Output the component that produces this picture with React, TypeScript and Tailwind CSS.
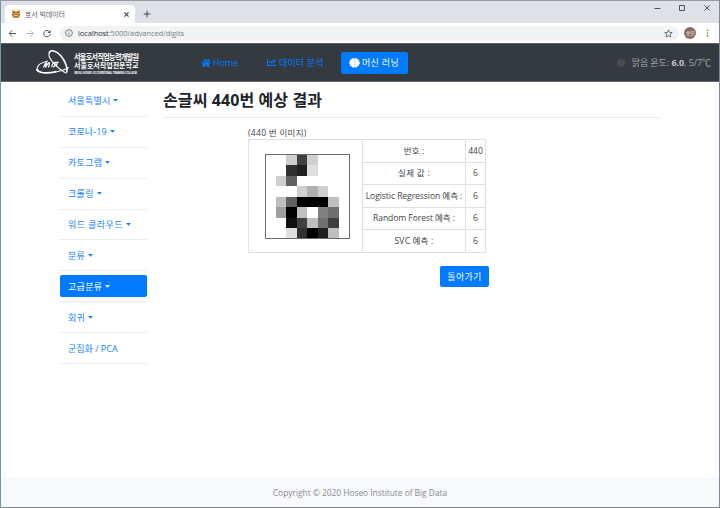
import React from "react";
import { FaHome, FaChartLine } from "react-icons/fa";

const KR = "font-['Open_Sans','Noto_Sans_CJK_KR',sans-serif]";

const menu = [
  { label: "서울특별시", caret: true, spacing: "tracking-[0.2px]" },
  { label: "코로나-19", caret: true, spacing: "tracking-[0.1px]" },
  { label: "카토그램", caret: true, spacing: "tracking-[0.3px]" },
  { label: "크롤링", caret: true, spacing: "tracking-[0.3px]" },
  { label: "워드 클라우드", caret: true, spacing: "tracking-[0.4px]" },
  { label: "분류", caret: true, spacing: "tracking-[0.3px]" },
  { label: "고급분류", caret: true, spacing: "tracking-[0.3px]", active: true },
  { label: "회귀", caret: true, spacing: "tracking-[0.3px]" },
  { label: "군집화 / PCA", caret: false, spacing: "tracking-[0px]" },
];

const digit = [
  [255, 255, 207, 64, 207, 255, 255, 255],
  [255, 255, 48, 32, 223, 255, 255, 255],
  [255, 207, 96, 255, 255, 255, 255, 255],
  [255, 255, 255, 207, 175, 207, 255, 255],
  [255, 191, 96, 0, 0, 0, 191, 255],
  [255, 159, 0, 191, 255, 128, 112, 255],
  [255, 255, 16, 64, 191, 112, 64, 255],
  [255, 255, 223, 48, 0, 32, 191, 255],
];

const results = [
  { name: "번호 :", value: "440", spacing: "tracking-[0.1px]" },
  { name: "실제 값 :", value: "6", spacing: "tracking-[0.3px]" },
  { name: "Logistic Regression 예측 :", value: "6", spacing: "tracking-[-0.04px]" },
  { name: "Random Forest 예측 :", value: "6", spacing: "tracking-[-0.04px]" },
  { name: "SVC 예측 :", value: "6", spacing: "tracking-[0.2px]" },
];

function TabStrip() {
  return (
    <div className="flex h-[23px] border-t border-[#96999d] bg-[#dee1e6] pl-[4px]">
      <div className="mt-[4px] flex h-[18px] w-[130px] items-center rounded-t-[4px] bg-white pl-[7px] pr-[6px]">
        <svg width="8" height="8" viewBox="0 0 8 8">
          <path d="M0 .3h2l1 .7h2l1-.7h2v5.700L7 8H1L0 6z" fill="#dda050" />
          <path d="M1 2h2v1H1zM5 2h2v1H5zM0 4.500h2v.8H0zM6 4.500h2v.8H6zM3 4h2v1H3zM2 6.500h4v.8H2z" fill="#6b5437" />
          <path d="M3 5h2v1H3z" fill="#f3dfb8" />
        </svg>
        <span className="ml-[5px] text-[7px] leading-none tracking-[-0.1px] text-[#5b5e62]">호서 빅데이터</span>
        <svg className="ml-auto" width="5" height="5" viewBox="0 0 5 5" stroke="#45484c" strokeWidth="1.1">
          <path d="M.4.4l4.2 4.2M4.6.4L.4 4.6" />
        </svg>
      </div>
      <svg className="ml-[8px] mt-[9px]" width="8" height="8" viewBox="0 0 8 8" stroke="#45484c" strokeWidth="1">
        <path d="M4 .7v6.6M.7 4h6.6" />
      </svg>
      <svg className="ml-auto mr-[7px] mt-[3px]" width="58" height="8" viewBox="0 0 58 8" fill="none" stroke="#3f4246" strokeWidth=".9">
        <path d="M.5 4.500h6M25.500 1.500h5v5h-5zM50.500 1.300l5.200 5.200M55.700 1.300l-5.200 5.200" />
      </svg>
    </div>
  );
}

function AddressBar() {
  return (
    <div className="flex h-[20px] items-center bg-white pl-[7px] pr-[8px]">
      <svg width="44" height="9" viewBox="0 0 44 9" fill="none" strokeWidth="1">
        <path d="M8 4.5H1.3M4.3 1.3L1.1 4.5l3.2 3.2" stroke="#55585d" />
        <path d="M18.3 4.5H25M22 1.3l3.2 3.2L22 7.7" stroke="#b4b6b9" />
        <path d="M41.6 2.7A3.2 3.2 0 1 0 42.2 5" stroke="#55585d" />
        <path d="M42.6.9v3.2h-3.2z" fill="#55585d" />
      </svg>
      <div className="ml-[8px] flex h-[15px] w-[619px] items-center rounded-full bg-[#f1f3f4] pl-[5px] pr-[6px]">
        <svg width="8" height="8" viewBox="0 0 8 8" fill="none" stroke="#5f6368" strokeWidth=".8">
          <circle cx="4" cy="4" r="3.4" />
          <path d="M4 3.5v2.3M4 2v.8" />
        </svg>
        <span className="ml-[5px] pt-px text-[7.5px] leading-none tracking-[-0.08px] text-[#7c8084]">
          <span className="text-[#303338]">localhost</span>:5000/advanced/digits
        </span>
        <svg className="ml-auto" width="9" height="9" viewBox="0 0 24 24" fill="none" stroke="#55585d" strokeWidth="2.3">
          <path d="M12 2.5l2.8 6.7 7.2.6-5.500 4.700 1.700 7L12 17.700 5.800 21.500l1.700-7L2 9.800l7.200-.6z" />
        </svg>
      </div>
      <div className="ml-[5px] flex h-[12px] w-[12px] items-center justify-center rounded-full bg-[#8d6e63] text-[5px] leading-none tracking-[-0.4px] text-white">승모</div>
      <svg className="ml-auto mr-[2px]" width="3" height="8" viewBox="0 0 3 8" fill="#5f6368">
        <path d="M.8.700h1.400v1.400H.8zM.8 3.400h1.400v1.400H.8zM.8 6.100h1.400v1.400H.8z" />
      </svg>
    </div>
  );
}

function Logo() {
  return (
    <div className="flex items-center">
      <svg width="34" height="27" viewBox="0 0 34 27" fill="none" stroke="#fff">
        <path d="M12 12C5 13.500 1.300 16.600 1.300 19.500c0 4.600 10 5.600 19.500 3.300 5-1.200 9-2.500 12-4.300" strokeWidth="1.100" />
        <path d="M0.500 20c.8 4.300 11 4.800 20 2.500" strokeWidth="1.500" />
        <path d="M13 4.500C14.300-.3 20.500 1.800 25 7c4.200 5 7 12 5.800 16.500" strokeWidth="1.600" />
        <path d="M13 4.500c-.8 3.500 1.500 6.500 5.500 10.700 4.500 4.600 8.300 7.500 12 9" strokeWidth="1.100" />
        <path d="M7.500 18.500c1-2.700 2.500-5.200 3-4.900s-.9 3-1 4.900c1.600-3 3.200-5.200 3.900-4.900s-.8 3-.9 4.900m3.500-.3c-.5-1.600 1-5 2.600-4.700s.2 4-1.600 4.800m1.800-5h3.800M21.500 13l-1.500 4.700" strokeWidth="1.200" />
      </svg>
      <div className="ml-[4px] flex w-[66px] flex-col pt-[3px] font-bold text-white">
        <span className="w-max origin-left scale-x-[0.830] whitespace-nowrap text-[8.500px] leading-[9px] tracking-[-0.770px]">서울호서직업능력개발원</span>
        <span className="w-max whitespace-nowrap text-[7px] leading-[9px]">서울호서직업전문학교</span>
        <span className="w-max origin-left scale-x-[0.790] whitespace-nowrap font-['Liberation_Sans',sans-serif] text-[3.500px] leading-[6px] tracking-[-0.250px]">SEOUL HOSEO OCCUPATIONAL TRAINING COLLEGE</span>
      </div>
    </div>
  );
}

function Navbar() {
  return (
    <div className="flex h-[39px] items-center border-b border-t border-b-[#62666b] border-t-[#5e6265] bg-[#343a40] pl-[35px] pr-[8px] text-[9px] leading-none">
      <Logo />
      <div className="ml-[61px] flex w-[66px] items-center text-[#007bff]">
        <FaHome size={10} />
        <span className="ml-[2px] tracking-[-0.15px]">Home</span>
      </div>
      <div className="flex w-[74px] items-center text-[#007bff]">
        <FaChartLine size={9} />
        <span className="ml-[3px] whitespace-nowrap tracking-[0.15px]">데이터 분석</span>
      </div>
      <div className="flex h-[22px] w-[67px] items-center rounded-[2px] bg-[#007bff] pl-[8px] text-white">
        <svg width="11" height="10" viewBox="0 0 11 10" fill="#fff">
          <path d="M5.400.5C3.900-.1 2.600.5 2.300 1.300 1 1.700.6 2.700.8 3.500-.2 4.500 0 6 .9 6.600c0 1.200.8 2 1.800 2 .6 1.200 1.900 1.400 2.700.6zM5.600.5c1.500-.6 2.800 0 3.100.8 1.300.4 1.700 1.400 1.500 2.200 1 1 .8 2.500-.1 3.100 0 1.200-.8 2-1.800 2-.6 1.200-1.900 1.400-2.700.6z" />
        </svg>
        <span className="ml-[2px] whitespace-nowrap tracking-[0.3px]">머신 러닝</span>
      </div>
      <div className="ml-auto flex items-center text-[#a2a6aa]">
        <span className="mr-[7px] h-[8px] w-[8px] rounded-full bg-[#4c4b4d]" />
        <span className="whitespace-nowrap tracking-[-0.06px]">맑음 온도: <b className="text-[#c1c4c7]">6.0</b>, 5/7℃</span>
      </div>
    </div>
  );
}

function Sidebar() {
  return (
    <ul className="w-[87px] shrink-0 pt-[4px] text-[9px] leading-none text-[#1584ff]">
      {menu.map((m) => (
        <li key={m.label} className="flex h-[30.900px] flex-col justify-center border-b border-[#eeeeef]">
          <div className={`flex h-[22px] items-center rounded-[2px] pl-[8px] ${m.active ? "bg-[#007bff] text-white" : ""}`}>
            <span className={`whitespace-nowrap ${m.spacing}`}>{m.label}</span>
            {m.caret && (
              <svg className="ml-[3px]" width="5" height="3" viewBox="0 0 5 3" fill="currentColor">
                <path d="M0 0h5L2.500 2.800z" />
              </svg>
            )}
          </div>
        </li>
      ))}
    </ul>
  );
}

function DigitImage() {
  return (
    <svg className="ml-[16px] mt-[2px]" width="86" height="85" viewBox="0 0 86 85" shapeRendering="crispEdges">
      {digit.map((row, y) =>
        row.map((v, x) => (
          <rect key={`${x}-${y}`} x={x * 10.5 + 0.4} y={y * 10.5 + 0.5} width="10.5" height="10.5" fill={`rgb(${v},${v},${v})`} />
        ))
      )}
      <rect x=".5" y=".5" width="84" height="84" fill="none" stroke="#6c6c6c" />
    </svg>
  );
}

function Result() {
  return (
    <main className="ml-[16px] w-[497px]">
      <h1 className="flex h-[36px] items-center border-b border-[#e9e9ea] text-[16px] font-bold leading-none tracking-[0.100px] text-[#212529]">손글씨 440번 예상 결과</h1>
      <div className="ml-[85px] mt-[10px] w-[241px] text-[8.500px] leading-none text-[#42464a]">
        <div className="flex h-[11px] items-center tracking-[0.3px]">(440 번 이미지)</div>
        <table className="w-[237px] table-fixed border-collapse text-center">
          <colgroup>
            <col className="w-[114px]" />
            <col className="w-[103px]" />
            <col className="w-[20px]" />
          </colgroup>
          <tbody>
            {results.map((r, i) => (
              <tr key={r.name} className="h-[22.600px]">
                {i === 0 && (
                  <td rowSpan={5} className="border border-[#dee2e6] p-0 align-middle">
                    <DigitImage />
                  </td>
                )}
                <td className={`whitespace-nowrap border border-[#dee2e6] p-0 ${r.spacing}`}>{r.name}</td>
                <td className="border border-[#dee2e6] p-0 tracking-[-0.1px]">{r.value}</td>
              </tr>
            ))}
          </tbody>
        </table>
        <button className="ml-auto mt-[13px] flex h-[21px] w-[49px] items-center justify-center rounded-[2px] bg-[#007bff] text-[9px] leading-none tracking-[0.3px] text-white">돌아가기</button>
      </div>
    </main>
  );
}

export default function App() {
  return (
    <div className={`flex h-[508px] w-[720px] flex-col overflow-hidden border-x border-b border-l-[#6b98a8] border-r-[#788a9f] border-b-[#82878c] bg-white ${KR}`}>
      <TabStrip />
      <AddressBar />
      <Navbar />
      <div className="flex flex-1 pl-[59px]">
        <Sidebar />
        <Result />
      </div>
      <footer className="flex h-[30px] items-center justify-center bg-[#f8f9fa] pt-[2px] text-[8.500px] leading-none tracking-[-0.070px] text-[#888c91]">Copyright © 2020 Hoseo Institute of Big Data</footer>
    </div>
  );
}
